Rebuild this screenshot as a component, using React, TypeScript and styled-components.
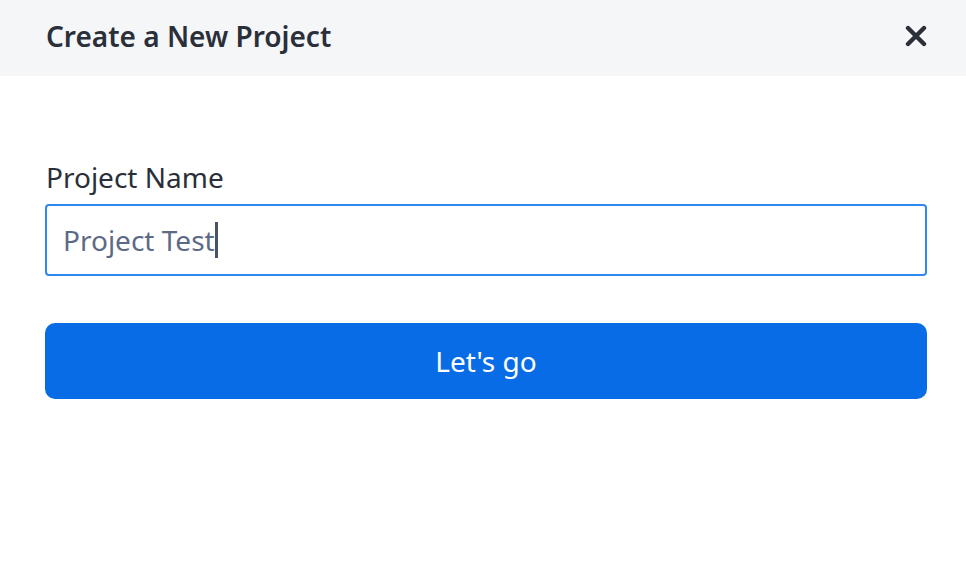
import * as React from 'react'
import styled, { createGlobalStyle } from 'styled-components'

const GlobalStyle = createGlobalStyle`
  html, body {
    margin: 0;
    padding: 0;
    background: #ffffff;
  }
  body {
    font-family: 'Noto Sans', 'Open Sans', sans-serif;
    color: #2a2f3a;
  }
`

const CloseIcon = () => (
  <svg width="22" height="22" viewBox="0 0 22 22" fill="none">
    <path
      d="M3 3 L19 19 M19 3 L3 19"
      stroke="#2a2f3a"
      strokeWidth="4.4"
      strokeLinecap="round"
    />
  </svg>
)

export default function App() {
  return (
    <>
      <GlobalStyle />
      <Modal>
        <Header>
          <Title>Create a New Project</Title>
          <CloseButton aria-label="Close">
            <CloseIcon />
          </CloseButton>
        </Header>
        <Body>
          <Field>
            <Label>Project Name</Label>
            <InputBox>
              <Value>Project Test</Value>
              <Caret />
            </InputBox>
          </Field>
          <SubmitButton>Let's go</SubmitButton>
        </Body>
      </Modal>
    </>
  )
}

// Styles
const Modal = styled.div`
  width: 966px;
  height: 576px;
  background: #ffffff;
`

const Header = styled.div`
  height: 76px;
  background: #f5f6f8;
  display: flex;
  align-items: center;
  justify-content: space-between;
  padding: 0 39px 4px 46px;
  box-sizing: border-box;
`

const Title = styled.h2`
  margin: 0;
  font-size: 28px;
  font-weight: 600;
  color: #2a2f3a;
`

const CloseButton = styled.button`
  border: none;
  background: none;
  padding: 0;
  display: flex;
  cursor: pointer;
`

const Body = styled.div`
  padding: 82px 39px 0 45px;
  display: flex;
  flex-direction: column;
  gap: 47px;
`

const Field = styled.div`
  display: flex;
  flex-direction: column;
  gap: 8px;
`

const Label = styled.label`
  font-size: 28px;
  color: #2a2f3a;
  padding-left: 1px;
  line-height: 38px;
`

const InputBox = styled.div`
  height: 72px;
  box-sizing: border-box;
  border: 2px solid #2f88ef;
  border-radius: 4px;
  display: flex;
  align-items: center;
  padding: 0 16px;
`

const Value = styled.span`
  font-size: 28px;
  color: #5d6a86;
`

const Caret = styled.span`
  width: 3px;
  height: 36px;
  background: #4a5266;
`

const SubmitButton = styled.button`
  height: 76px;
  border: none;
  border-radius: 10px;
  background: #086ce6;
  color: #ffffff;
  font-family: inherit;
  font-size: 28px;
  cursor: pointer;
`
